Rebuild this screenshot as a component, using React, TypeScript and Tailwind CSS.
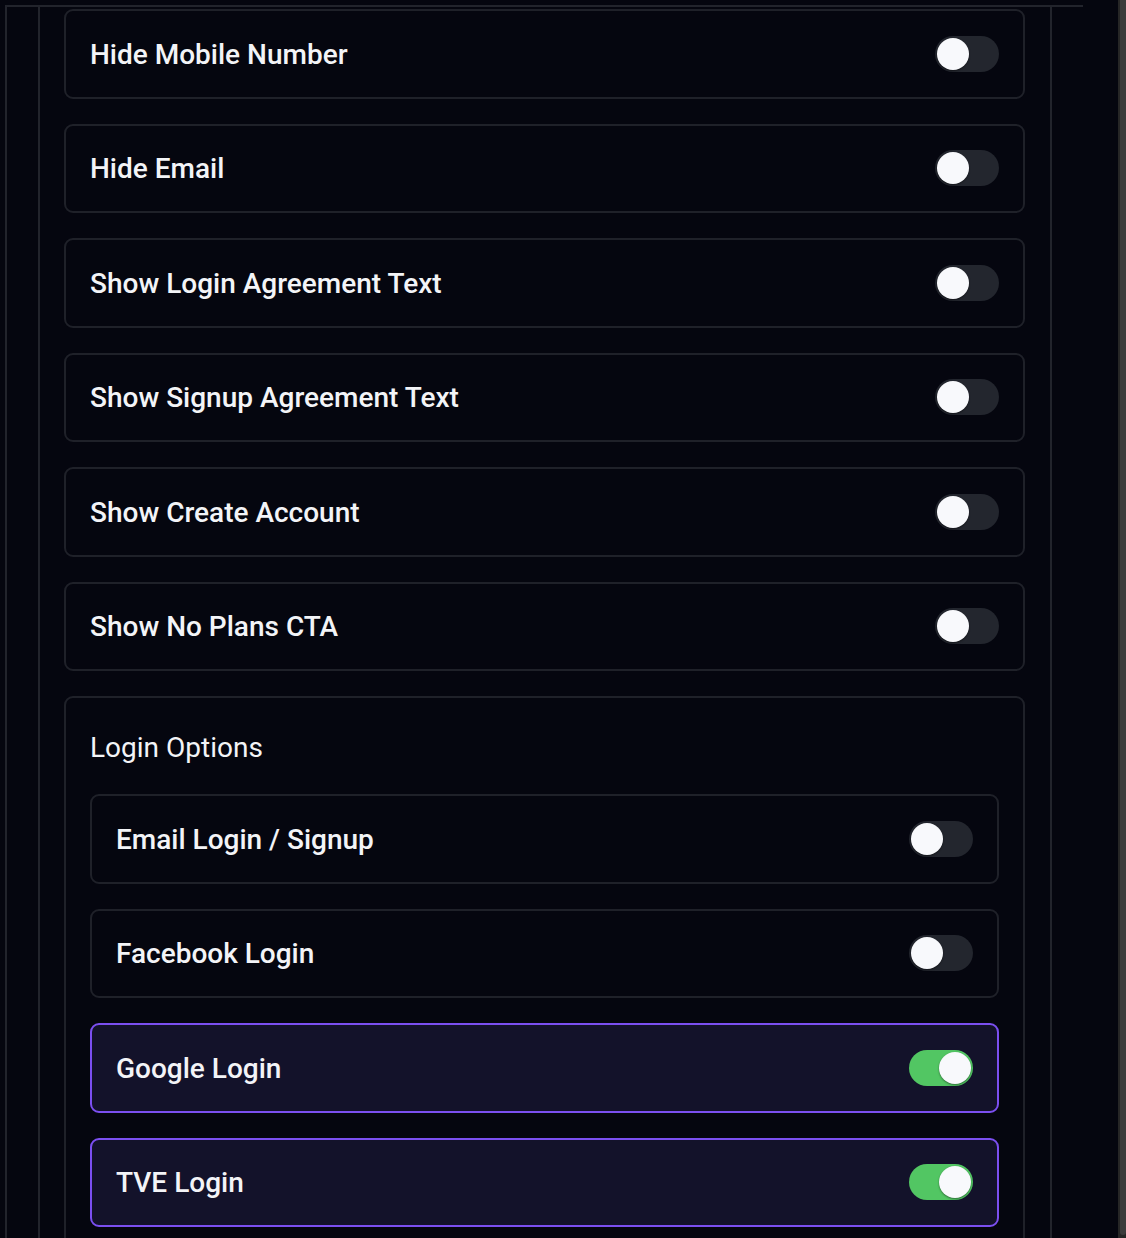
import clsx from 'clsx';

const TOP_SETTINGS = [
  'Hide Mobile Number',
  'Hide Email',
  'Show Login Agreement Text',
  'Show Signup Agreement Text',
  'Show Create Account',
  'Show No Plans CTA',
];

const LOGIN_OPTIONS = [
  { label: 'Email Login / Signup', on: false },
  { label: 'Facebook Login', on: false },
  { label: 'Google Login', on: true },
  { label: 'TVE Login', on: true },
];

function Toggle({ on }: { on: boolean }) {
  return (
    <div
      className={clsx(
        'w-[64px] h-[36px] rounded-full p-[2px] flex shrink-0',
        on ? 'bg-[#52c663] justify-end' : 'bg-[#23262e] justify-start'
      )}
    >
      <div className="w-[32px] h-[32px] rounded-full bg-[#f8f9fc] shadow-[0_1px_2px_rgba(0,0,0,0.45)]" />
    </div>
  );
}

function SettingRow({ label, on = false }: { label: string; on?: boolean }) {
  return (
    <div
      className={clsx(
        'h-[89.5px] rounded-[9px] border-2 flex items-center justify-between pl-[24px] pr-[24px]',
        on ? 'border-[#7b4ff0] bg-[#13122a]' : 'border-[#1f2129] bg-[#05060f]'
      )}
    >
      <span className="text-[28px] font-medium text-[#f3f4f7] leading-[32px] pt-[2px]">{label}</span>
      <Toggle on={on} />
    </div>
  );
}

export default function App() {
  return (
    <div className="h-[1238px] w-[1126px] bg-[#05060f] flex overflow-hidden font-['Roboto',sans-serif]">
      <div className="flex-1 pl-[5px] pt-[5px]">
        <div className="w-[1078px] h-full border-t-2 border-l-2 border-[#22242c]">
          <div className="ml-[31px] w-[1014px] h-full border-l-2 border-r-2 border-[#22242c] pl-[24px] pr-[25px] pt-[2px]">
            <div className="flex flex-col gap-[25px]">
              {TOP_SETTINGS.map((label) => (
                <SettingRow key={label} label={label} />
              ))}

              <div className="rounded-[9px] border-2 border-[#1f2129] px-[24px] pt-[34px] pb-[26px]">
                <h3 className="text-[28px] font-normal text-[#f3f4f7] leading-[32px] mb-[30px]">Login Options</h3>
                <div className="flex flex-col gap-[25px]">
                  {LOGIN_OPTIONS.map((opt) => (
                    <SettingRow key={opt.label} label={opt.label} on={opt.on} />
                  ))}
                </div>
              </div>
            </div>
          </div>
        </div>
      </div>

      {/* scrollbar */}
      <div className="w-[8px] h-full bg-[#262626] flex justify-end">
        <div className="w-[6px] h-[1235px] rounded-b-[3px] bg-[#3c3c3c]" />
      </div>
    </div>
  );
}
